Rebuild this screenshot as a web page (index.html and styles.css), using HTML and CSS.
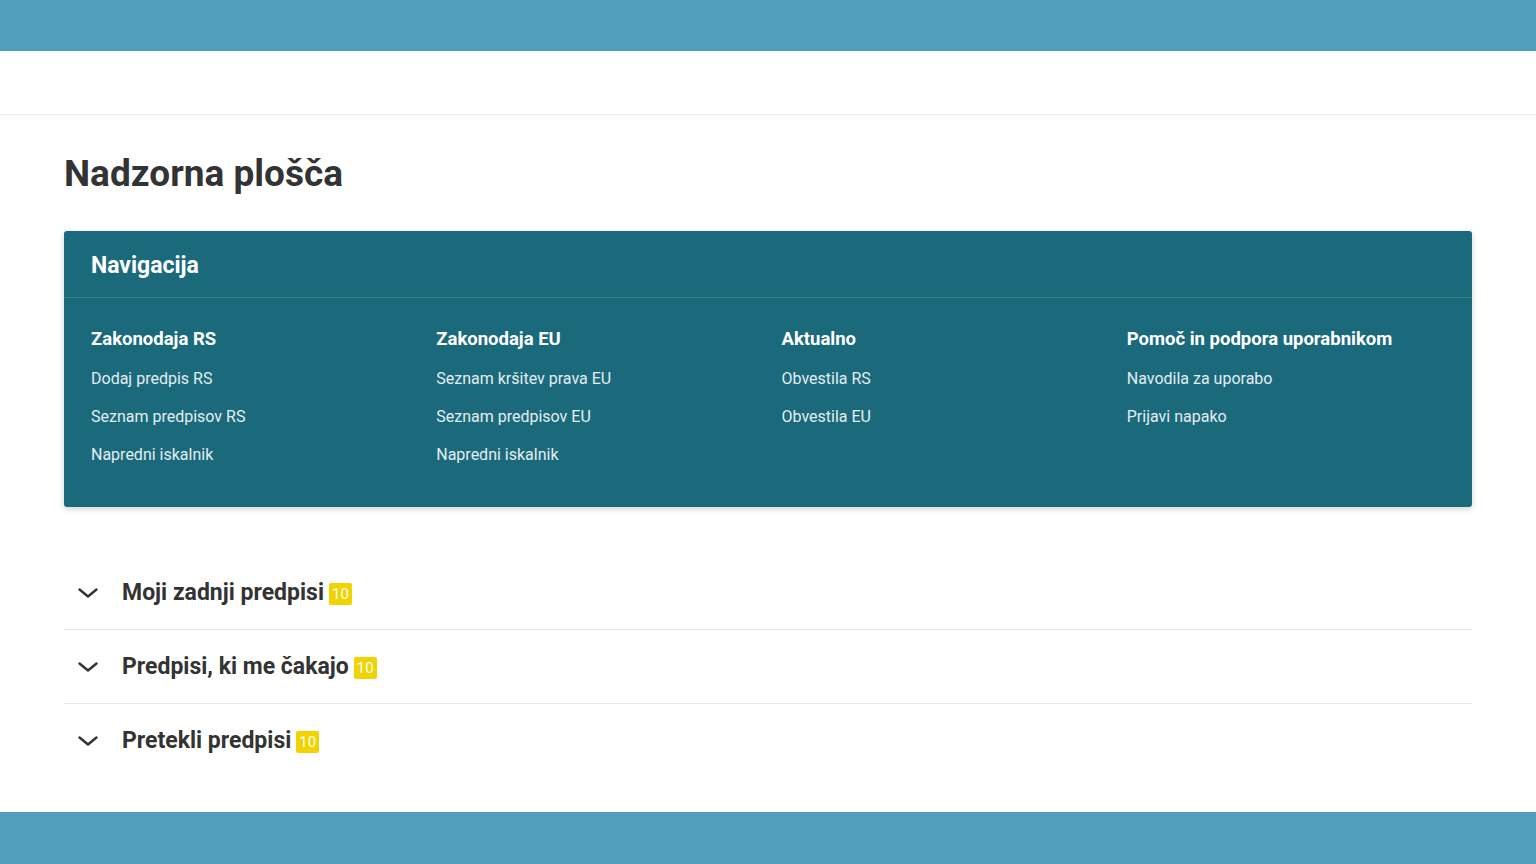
FILE: index.html
```html
<!DOCTYPE html>
<html lang="sl">

<head>
    <meta charset="UTF-8">
    <meta name="viewport" content="width=device-width, initial-scale=1.0">
    <title>Nadzorna plošča</title>
    <link rel="stylesheet" href="styles.css">
</head>

<body>
    <div class="top-band"></div>
    <header class="toolbar"></header>

    <main class="page">
        <h1 class="page-title">Nadzorna plošča</h1>

        <!-- Navigation card -->
        <section class="nav-card">
            <div class="nav-card-head">Navigacija</div>
            <div class="nav-grid">
                <div class="nav-col">
                    <h3>Zakonodaja RS</h3>
                    <a href="#">Dodaj predpis RS</a>
                    <a href="#">Seznam predpisov RS</a>
                    <a href="#">Napredni iskalnik</a>
                </div>
                <div class="nav-col">
                    <h3>Zakonodaja EU</h3>
                    <a href="#">Seznam kršitev prava EU</a>
                    <a href="#">Seznam predpisov EU</a>
                    <a href="#">Napredni iskalnik</a>
                </div>
                <div class="nav-col">
                    <h3>Aktualno</h3>
                    <a href="#">Obvestila RS</a>
                    <a href="#">Obvestila EU</a>
                </div>
                <div class="nav-col">
                    <h3>Pomoč in podpora uporabnikom</h3>
                    <a href="#">Navodila za uporabo</a>
                    <a href="#">Prijavi napako</a>
                </div>
            </div>
        </section>

        <!-- Collapsible lists -->
        <div class="panels">
            <div class="panel">
                <svg class="chevron" viewBox="0 0 20 10"><path d="M1.5 1.5 L10 8.5 L18.5 1.5" /></svg>
                <span class="panel-title">Moji zadnji predpisi</span>
                <span class="badge">10</span>
            </div>
            <div class="panel">
                <svg class="chevron" viewBox="0 0 20 10"><path d="M1.5 1.5 L10 8.5 L18.5 1.5" /></svg>
                <span class="panel-title">Predpisi, ki me čakajo</span>
                <span class="badge">10</span>
            </div>
            <div class="panel">
                <svg class="chevron" viewBox="0 0 20 10"><path d="M1.5 1.5 L10 8.5 L18.5 1.5" /></svg>
                <span class="panel-title">Pretekli predpisi</span>
                <span class="badge">10</span>
            </div>
        </div>
    </main>

    <div class="bottom-band"></div>
</body>

</html>
```

FILE: styles.css
```css
body {
    margin: 0;
    font-family: Roboto, "Liberation Sans", sans-serif;
    background-color: #fff;
    color: #333;
}

.top-band {
    height: 51px;
    background: #529dbb;
}

.toolbar {
    height: 63px;
    border-bottom: 1px solid #ececec;
}

.page {
    padding: 0 64px 34px;
}

.page-title {
    margin: 0;
    padding: 38px 0 36px;
    font-size: 37px;
    font-weight: 700;
    line-height: 42px;
    color: #333;
}

/* Navigation card */
.nav-card {
    background: #1b6a7c;
    border-radius: 3px;
    box-shadow: 0 2px 6px rgba(0, 0, 0, 0.18);
    color: #fff;
    height: 276px;
}

.nav-card-head {
    padding: 4px 27px 0;
    height: 62px;
    line-height: 62px;
    font-size: 23px;
    font-weight: 700;
    border-bottom: 1px solid rgba(255, 255, 255, 0.12);
}

.nav-grid {
    display: grid;
    grid-template-columns: repeat(4, 1fr);
    padding: 29px 0 0 27px;
}

.nav-col {
    display: flex;
    flex-direction: column;
}

.nav-col h3 {
    margin: 0 0 17px;
    font-size: 18.5px;
    font-weight: 700;
    line-height: 24px;
}

.nav-col a {
    color: #e3edf0;
    text-decoration: none;
    font-size: 16px;
    line-height: 22px;
    margin-bottom: 16px;
}

/* Collapsible lists */
.panels {
    margin-top: 49px;
}

.panel {
    display: flex;
    align-items: center;
    height: 73px;
    border-bottom: 1px solid #e8e8e8;
}

.panel:last-child {
    border-bottom-color: transparent;
}

.chevron {
    width: 20px;
    height: 10px;
    margin: 0 24px 0 14px;
    fill: none;
    stroke: #333;
    stroke-width: 2.4;
    stroke-linecap: round;
    stroke-linejoin: round;
}

.panel-title {
    font-size: 23px;
    font-weight: 700;
    color: #333;
}

.badge {
    margin-left: 5px;
    width: 23px;
    height: 22px;
    line-height: 22px;
    text-align: center;
    background: #f0d300;
    color: #fff;
    border-radius: 2px;
    font-size: 15px;
    margin-top: 2px;
}

.bottom-band {
    height: 52px;
    background: #529dbb;
}
```
